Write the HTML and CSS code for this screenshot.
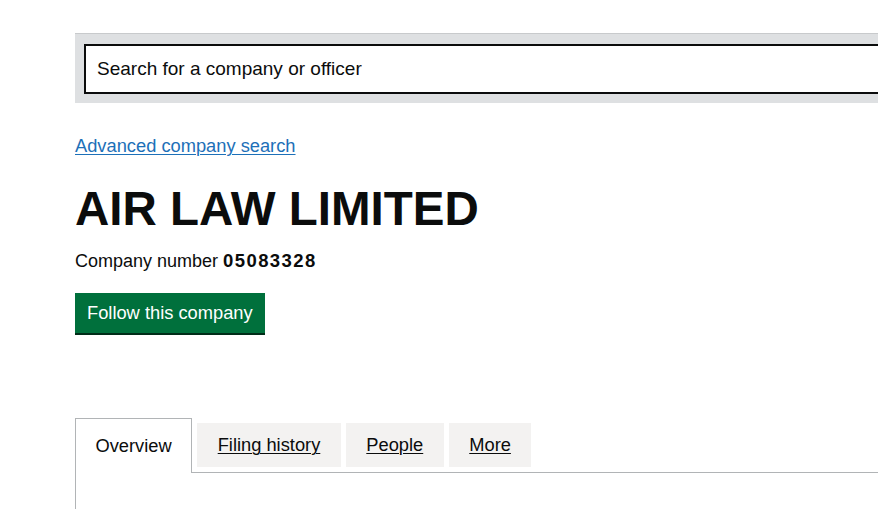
FILE: index.html
```html
<!DOCTYPE html>
<html lang="en">
<head>
<meta charset="utf-8">
<title>AIR LAW LIMITED</title>
<link rel="stylesheet" href="styles.css">
</head>
<body>
<div class="page">
  <form class="search-bar">
    <input class="search-input" type="text" placeholder="Search for a company or officer" aria-label="Search for a company or officer">
  </form>
  <main class="content">
    <a class="adv-link" href="#">Advanced company search</a>
    <h1 class="company-name">AIR LAW LIMITED</h1>
    <p class="company-number">Company number <strong>05083328</strong></p>
    <a class="follow-btn" href="#">Follow this company</a>
    <div class="tabs">
      <ul class="tab-list">
        <li class="tab tab-selected"><a href="#">Overview</a></li>
        <li class="tab"><a href="#">Filing history</a></li>
        <li class="tab"><a href="#">People</a></li>
        <li class="tab"><a href="#">More</a></li>
      </ul>
      <div class="tab-panel"></div>
    </div>
  </main>
</div>
</body>
</html>
```

FILE: styles.css
```css
html, body {
  margin: 0;
  padding: 0;
  overflow: hidden;
  background: #ffffff;
}

body {
  font-family: "Liberation Sans", Arial, sans-serif;
  color: #0b0c0c;
}

.page {
  width: 960px;
  margin-left: 75px;
  padding-top: 33px;
}

.search-bar {
  margin: 0;
  background: #dee0e2;
  border-top: 1px solid #c8cacc;
  padding: 10px 10px 9px 9px;
}

.search-input {
  display: block;
  box-sizing: border-box;
  width: 100%;
  height: 50px;
  margin: 0;
  border: 2px solid #0b0c0c;
  background: #ffffff;
  padding: 0 11px;
  font-family: "Liberation Sans", Arial, sans-serif;
  font-size: 19px;
  color: #0b0c0c;
  outline: none;
}

.search-input::placeholder {
  color: #0b0c0c;
  opacity: 1;
}

.content {
  display: flex;
  flex-direction: column;
  align-items: flex-start;
  padding-top: 30px;
}

.adv-link {
  font-size: 18.3px;
  line-height: 25px;
  color: #1d70b8;
  text-decoration: underline;
  text-underline-offset: 2px;
  text-decoration-thickness: 1px;
}

.company-name {
  margin: 26px 0 0;
  font-size: 47.5px;
  line-height: 50px;
  font-weight: 700;
}

.company-number {
  margin: 15px 0 0;
  font-size: 18px;
  line-height: 25px;
}

.company-number strong {
  font-weight: 700;
  font-size: 18.5px;
  line-height: 20px;
  letter-spacing: 1.4px;
}

.follow-btn {
  margin-top: 19px;
  display: flex;
  align-items: center;
  box-sizing: border-box;
  width: 190px;
  height: 40px;
  padding: 0 12px;
  background: #00703c;
  color: #ffffff;
  font-size: 18.3px;
  text-decoration: none;
  box-shadow: 0 2px 0 #002d18;
}

.tabs {
  margin-top: 85px;
  width: 100%;
}

.tab-list {
  list-style: none;
  margin: 0;
  padding: 0;
  display: flex;
  align-items: flex-start;
  gap: 5px;
  border-bottom: 1px solid #b1b4b6;
}

.tab {
  margin: 5px 0;
  height: 44px;
  display: flex;
  align-items: center;
  padding: 0 20.5px;
  background: #f3f2f1;
  font-size: 18.3px;
}

.tab a {
  color: #0b0c0c;
  text-decoration: underline;
  text-underline-offset: 2px;
  text-decoration-thickness: 1px;
}

.tab-selected {
  margin: 0 0 -1px;
  height: 54px;
  padding: 0 19.5px;
  background: #ffffff;
  border: 1px solid #b1b4b6;
  border-bottom: 0;
}

.tab-selected a {
  text-decoration: none;
}

.tab-panel {
  height: 200px;
  border: 1px solid #b1b4b6;
  border-top: 0;
}
```
